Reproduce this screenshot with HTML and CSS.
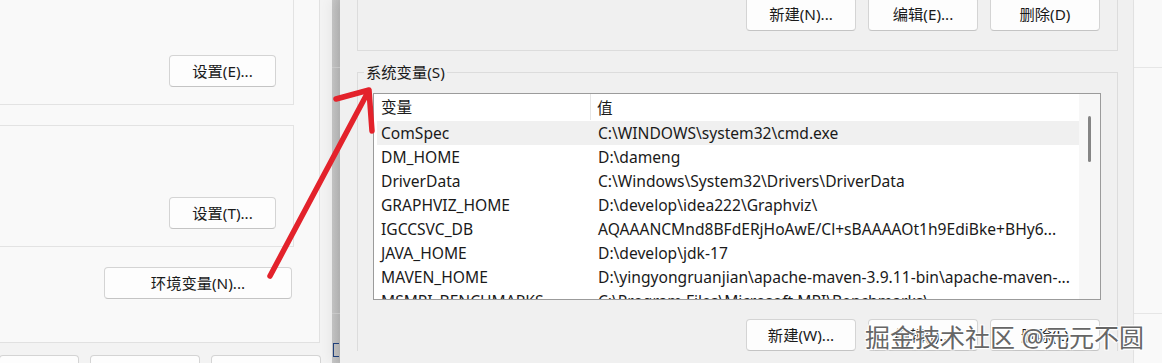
FILE: index.html
```html
<!DOCTYPE html>
<html lang="zh-CN">
<head>
    <meta charset="UTF-8">
    <title>环境变量</title>
    <link rel="stylesheet" href="styles.css">
</head>
<body>
    <div class="win-left">
        <div class="page">
            <div class="group group-top">
                <button class="btn btn-set">设置(E)...</button>
            </div>
            <div class="group group-mid">
                <button class="btn btn-set">设置(T)...</button>
            </div>
            <div class="env-row">
                <button class="btn btn-env">环境变量(N)...</button>
            </div>
        </div>
        <div class="dlg-buttons">
            <button class="btn btn-cut b1"></button>
            <button class="btn btn-cut b2"></button>
            <button class="btn btn-cut b3"></button>
        </div>
    </div>

    <div class="gap-strip">
        <div class="line-a"></div>
        <div class="line-b"></div>
    </div>

    <div class="win-right">
        <div class="user-group">
            <button class="btn btn-var">新建(N)...</button>
            <button class="btn btn-var">编辑(E)...</button>
            <button class="btn btn-var">删除(D)</button>
        </div>

        <fieldset class="sys-group">
            <legend>系统变量(S)</legend>
            <div class="listbox">
                <div class="list">
                    <div class="list-head">
                        <span class="col-name">变量</span>
                        <span class="col-value">值</span>
                    </div>
                    <div class="row selected"><span class="col-name">ComSpec</span><span class="col-value">C:\WINDOWS\system32\cmd.exe</span></div>
                    <div class="row"><span class="col-name">DM_HOME</span><span class="col-value">D:\dameng</span></div>
                    <div class="row"><span class="col-name">DriverData</span><span class="col-value">C:\Windows\System32\Drivers\DriverData</span></div>
                    <div class="row"><span class="col-name">GRAPHVIZ_HOME</span><span class="col-value">D:\develop\idea222\Graphviz\</span></div>
                    <div class="row"><span class="col-name">IGCCSVC_DB</span><span class="col-value">AQAAANCMnd8BFdERjHoAwE/Cl+sBAAAAOt1h9EdiBke+BHy6...</span></div>
                    <div class="row"><span class="col-name">JAVA_HOME</span><span class="col-value">D:\develop\jdk-17</span></div>
                    <div class="row"><span class="col-name">MAVEN_HOME</span><span class="col-value">D:\yingyongruanjian\apache-maven-3.9.11-bin\apache-maven-...</span></div>
                    <div class="row"><span class="col-name">MSMPI_BENCHMARKS</span><span class="col-value">C:\Program Files\Microsoft MPI\Benchmarks\</span></div>
                </div>
                <div class="scrollbar"><div class="thumb"></div></div>
            </div>
            <div class="sys-buttons">
                <button class="btn btn-var">新建(W)...</button>
                <button class="btn btn-var">编辑(I)...</button>
                <button class="btn btn-var">删除(L)</button>
            </div>
        </fieldset>
    </div>

    <div class="win-back">
        <div class="line-a"></div>
        <div class="line-b"></div>
    </div>

    <span class="caret"></span>
    <div class="watermark">掘金技术社区 @元元不圆</div>

    <svg class="arrow" width="1162" height="363" viewBox="0 0 1162 363">
        <path d="M270 276 L368 92 M336 99 L369 90 L372 131" fill="none" stroke="#e3222b" stroke-width="5.5" stroke-linecap="round" stroke-linejoin="round"/>
    </svg>
</body>
</html>
```

FILE: styles.css
```css
body {
    margin: 0;
    width: 1162px;
    height: 363px;
    overflow: hidden;
    display: flex;
    position: relative;
    font-family: "Noto Sans", "Noto Sans CJK SC", sans-serif;
    font-size: 15.6px;
    color: #1a1a1a;
    background-color: #f0f0f0;
}
.btn {
    font-family: inherit;
    font-size: 15.3px;
    color: #1a1a1a;
    background-color: #fdfdfd;
    border: 1px solid #d4d4d4;
    border-bottom-color: #c4c4c4;
    border-radius: 4px;
    height: 32px;
    padding: 0;
    box-sizing: border-box;
    line-height: 28px;
    flex: none;
}

/* left window */
.win-left {
    width: 332px;
    flex: none;
    background-color: #f3f3f3;
    display: flex;
    flex-direction: column;
}
.page {
    width: 320px;
    height: 343px;
    flex: none;
    box-sizing: border-box;
    background-color: #f9f9f9;
    border-right: 1px solid #e1e1e1;
    border-bottom: 1px solid #e1e1e1;
    padding-right: 25px;
    display: flex;
    flex-direction: column;
}
.group {
    border: 1px solid #e3e3e3;
    border-left: none;
    display: flex;
    justify-content: flex-end;
    align-items: flex-end;
    padding: 0 17px 17px 0;
    box-sizing: border-box;
    flex: none;
}
.group-top {
    height: 105px;
    border-top: none;
}
.group-mid {
    height: 122px;
    margin-top: 20px;
}
.btn-set {
    width: 107px;
}
.env-row {
    display: flex;
    justify-content: flex-end;
    padding: 20px 2px 0 0;
}
.btn-env {
    width: 188px;
}
.dlg-buttons {
    display: flex;
    margin-top: 12px;
    gap: 11px;
    flex: none;
}
.btn-cut {
    height: 20px;
    border-bottom: none;
    border-radius: 4px 4px 0 0;
}
.b1 { width: 80px; margin-left: -1px; }
.b2 { width: 110px; }
.b3 { width: 110px; }

/* strip between windows */
.gap-strip {
    width: 8px;
    flex: none;
    background: linear-gradient(90deg, #c9c9c9, #bcbcbc);
}
.gap-strip .line-a,
.win-back .line-a {
    height: 67px;
    border-bottom: 1px solid #d2d2d2;
}
.gap-strip .line-b,
.win-back .line-b {
    height: 245px;
    border-bottom: 1px solid #d2d2d2;
}
.win-back .line-a,
.win-back .line-b {
    border-bottom-color: #e6e6e6;
}

/* right window */
.win-right {
    width: 793px;
    flex: none;
    background-color: #f0f0f0;
    box-shadow: -8px 0 12px rgba(0, 0, 0, 0.07);
    padding-left: 17px;
    box-sizing: border-box;
    position: relative;
}
.user-group {
    width: 761px;
    height: 51px;
    box-sizing: border-box;
    border: 1px solid #dcdcdc;
    border-top: none;
    display: flex;
    justify-content: flex-end;
    align-items: flex-end;
    gap: 12px;
    padding: 0 17px 19px 0;
}
.user-group .btn {
    height: 34px;
}
.btn-var {
    width: 110px;
    background-color: #fdfdfd;
}
.sys-group {
    width: 761px;
    box-sizing: border-box;
    margin: 11px 0 0 0;
    padding: 11px 16px 0 15px;
    border: 1px solid #dcdcdc;
    border-bottom: none;
    min-inline-size: 0;
}
.sys-group legend {
    padding: 0 2px;
    margin-left: -9px;
    line-height: 20px;
    font-size: 15.3px;
    color: #1a1a1a;
}
.listbox {
    height: 207px;
    box-sizing: border-box;
    border: 1px solid #9b9b9b;
    background-color: #ffffff;
    display: flex;
    overflow: hidden;
}
.list {
    flex: 1;
    min-width: 0;
    padding-left: 3px;
}
.list-head {
    height: 26px;
    margin-left: -3px;
    display: grid;
    grid-template-columns: 217px 1fr;
    align-items: center;
    margin-bottom: 1px;
}
.list-head .col-name {
    padding-left: 7px;
    border-right: 1px solid #e5e5e5;
    line-height: 26px;
}
.list-head .col-value {
    padding-left: 6px;
}
.row {
    height: 24px;
    display: grid;
    grid-template-columns: 214px 1fr;
    align-items: center;
    white-space: nowrap;
}
.row.selected {
    background-color: #f0f0f0;
}
.row .col-name {
    padding-left: 4px;
}
.row .col-value {
    padding-left: 7px;
    overflow: hidden;
}
.scrollbar {
    width: 21px;
    flex: none;
    background-color: #f7f7f7;
}
.thumb {
    width: 3px;
    height: 46px;
    margin: 22px 0 0 9px;
    border-radius: 2px;
    background-color: #858585;
}
.sys-buttons {
    display: flex;
    justify-content: flex-end;
    gap: 12px;
    margin-top: 19px;
    padding-right: 1px;
}

/* window behind */
.win-back {
    flex: 1;
    background-color: #f9f9f9;
    border-left: 1px solid #e2e2e2;
}

/* overlays */
.caret {
    position: absolute;
    left: 333px;
    top: 343px;
    width: 5px;
    height: 12px;
    border: 1.5px solid #1f3f7a;
    border-right: none;
}
.watermark {
    position: absolute;
    left: 865px;
    top: 320px;
    font-size: 25px;
    line-height: 34px;
    color: #666666;
    text-shadow: 0 0 1px #fff, 1px 1px 1px #fff, -1px -1px 1px #fff, 1px -1px 1px #fff, -1px 1px 1px #fff;
    white-space: nowrap;
}
.arrow {
    position: absolute;
    left: 0;
    top: 0;
    pointer-events: none;
}
```
